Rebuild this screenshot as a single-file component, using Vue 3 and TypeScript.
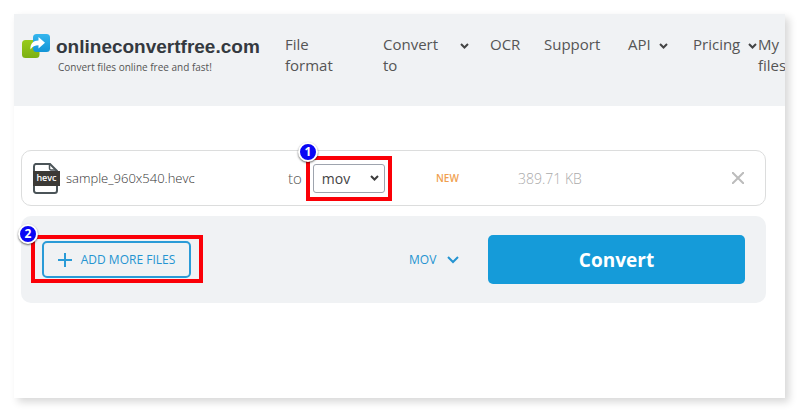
<script setup lang="ts">
import { ref } from 'vue'

interface NavItem {
  label: string
  menu: boolean
  kind: string
}

const navItems: NavItem[] = [
  { label: 'File format', menu: false, kind: 'narrow' },
  { label: 'Convert to', menu: true, kind: 'spread' },
  { label: 'OCR', menu: false, kind: '' },
  { label: 'Support', menu: false, kind: '' },
  { label: 'API', menu: true, kind: '' },
  { label: 'Pricing', menu: true, kind: '' },
  { label: 'My files', menu: false, kind: '' },
]

const formats = ['mov', 'mp4', 'avi', 'mkv']
const format = ref('mov')
</script>

<template>
  <div class="page">
    <header class="header">
      <a class="brand" href="#">
        <svg class="logo" viewBox="0 0 28 24" aria-hidden="true">
          <defs>
            <linearGradient id="green" x1="0" y1="0" x2="0" y2="1">
              <stop offset="0" stop-color="#97cb1c" />
              <stop offset="1" stop-color="#7cb013" />
            </linearGradient>
            <linearGradient id="blue" x1="0" y1="0" x2="0" y2="1">
              <stop offset="0" stop-color="#35b6ee" />
              <stop offset="1" stop-color="#1294d6" />
            </linearGradient>
          </defs>
          <rect x="0" y="6" width="17.500" height="18" rx="3.500" fill="url(#green)" />
          <rect x="11" y="0" width="17" height="18" rx="3.500" fill="url(#blue)" />
          <path d="M8.500 15.500C8 9.500 11.500 6.500 16.500 6.500V3L23 8.800l-6.500 5.700v-3.300c-3.500 0-6 1-8 4.300z" fill="#fff" />
        </svg>
        <span class="brand-text">
          <span class="brand-name">onlineconvertfree.com</span>
          <span class="tagline">Convert files online free and fast!</span>
        </span>
      </a>
      <nav class="nav">
        <a v-for="item in navItems" :key="item.label" class="nav-item" :class="item.kind" href="#">
          <span class="nav-label">{{ item.label }}</span>
          <svg v-if="item.menu" class="chevron" viewBox="0 0 9 6" aria-hidden="true">
            <path d="M1 1l3.500 3.500L8 1" fill="none" stroke="#444" stroke-width="2" />
          </svg>
        </a>
      </nav>
    </header>

    <main class="content">
      <section class="file-row">
        <div class="file">
          <svg class="file-icon" viewBox="0 0 28 31" aria-hidden="true">
            <path d="M3.500 1H18l7 7v19.500a2.500 2.500 0 0 1-2.500 2.500h-18.500A2.500 2.500 0 0 1 2 27.500v-24A2.500 2.500 0 0 1 3.500 1z" fill="#fff" stroke="#4b5458" stroke-width="2" />
            <path d="M17.500 1v4.500A1.500 1.500 0 0 0 19 7H24" fill="none" stroke="#4b5458" stroke-width="1.500" />
            <rect x="1" y="8" width="27" height="15" fill="#3c3a36" />
            <text class="file-type" x="14.500" y="18" text-anchor="middle">hevc</text>
          </svg>
          <span class="file-name">sample_960x540.hevc</span>
        </div>
        <div class="target">
          <label class="to" for="format">to</label>
          <span class="select-box">
            <select id="format" v-model="format" class="select">
              <option v-for="name in formats" :key="name" :value="name">{{ name }}</option>
            </select>
            <svg class="select-arrow" viewBox="0 0 9 6" aria-hidden="true">
              <path d="M1 1l3.500 3.500L8 1" fill="none" stroke="#3c3c3c" stroke-width="2" />
            </svg>
            <span class="highlight"><span class="badge above">1</span></span>
          </span>
        </div>
        <span class="new">NEW</span>
        <span class="size">389.71 KB</span>
        <button class="remove" type="button" aria-label="Remove file">
          <svg viewBox="0 0 12 12" aria-hidden="true">
            <path d="M0 0l12 12M12 0L0 12" fill="none" stroke="#bcbcbc" stroke-width="2" />
          </svg>
        </button>
      </section>

      <section class="actions">
        <div class="add-box">
          <button class="add" type="button">
            <svg viewBox="0 0 14 14" aria-hidden="true">
              <path d="M7 0v14M0 7h14" fill="none" stroke="#2a9bd7" stroke-width="2" />
            </svg>
            <span>ADD MORE FILES</span>
          </button>
          <span class="highlight wide"><span class="badge corner">2</span></span>
        </div>
        <button class="all" type="button">
          <span>MOV</span>
          <svg viewBox="0 0 12 8" aria-hidden="true">
            <path d="M1 1l5 5 5-5" fill="none" stroke="#2494d1" stroke-width="2" />
          </svg>
        </button>
        <button class="convert" type="button">Convert</button>
      </section>
    </main>
  </div>
</template>

<style>
body {
  background: #fff;
}
</style>

<style scoped>
.page {
  box-sizing: border-box;
  min-height: calc(100vh - 29px);
  margin: 14px 15px 15px 14px;
  overflow: hidden;
  background: #fff;
  box-shadow: 4px 4px 8px rgba(0, 0, 0, 0.16);
  font-family: "Open Sans", "Noto Sans", sans-serif;
  color: #555;
}

button {
  margin: 0;
  padding: 0;
  border: 0;
  background: none;
  font-family: inherit;
  cursor: pointer;
}

svg {
  display: block;
  flex: none;
}

.header {
  display: grid;
  grid-template-columns: 263fr 500fr;
  align-items: start;
  padding: 20px 0 30px 8px;
  background: #f0f2f4;
}

.brand {
  display: flex;
  gap: 6px;
  color: inherit;
  text-decoration: none;
}

.logo {
  width: 28px;
  height: 24px;
}

.brand-text {
  display: flex;
  flex-direction: column;
  white-space: nowrap;
}

.brand-name {
  font: bold 19px/26px "Liberation Sans", Arial, sans-serif;
  color: #34393f;
}

.tagline {
  padding-left: 2px;
  font-size: 10px;
  line-height: 14px;
}

.nav {
  display: grid;
  grid-template-columns:
    minmax(0, 98fr) minmax(0, 107fr) minmax(0, 54fr) minmax(0, 84fr)
    minmax(0, 65fr) minmax(0, 65fr) minmax(0, 27fr);
}

.nav-item {
  display: flex;
  align-items: flex-start;
  gap: 8px;
  font-size: 15px;
  line-height: 21px;
  color: #555;
  text-decoration: none;
}

.narrow .nav-label {
  width: 60px;
}

.spread .nav-label {
  width: 69px;
}

.chevron {
  width: 9px;
  height: 6px;
  margin-top: 9px;
}

.content {
  display: flex;
  flex-direction: column;
  gap: 10px;
  padding: 44px 19px 95px 7px;
}

.file-row {
  display: grid;
  grid-template-columns: 256fr 148fr 82fr 214fr 23fr;
  align-items: center;
  box-sizing: border-box;
  height: 56px;
  padding: 0 10px;
  border: 1px solid #dcdddd;
  border-radius: 10px;
}

.file {
  display: flex;
  align-items: center;
  gap: 6px;
}

.file-icon {
  width: 28px;
  height: 31px;
}

.file-type {
  font: 600 9px "Open Sans", sans-serif;
  fill: #fff;
}

.file-name {
  font-size: 13px;
  font-weight: 300;
  color: #333;
}

.target {
  display: flex;
  align-items: center;
  gap: 11px;
}

.to {
  font-size: 15px;
  font-weight: 300;
}

.select-box {
  position: relative;
  width: 72px;
}

.select {
  display: block;
  appearance: none;
  box-sizing: border-box;
  width: 100%;
  height: 29px;
  padding: 0 8px;
  border: 1px solid #9ea4ae;
  border-radius: 3px;
  background: #fff;
  font-family: inherit;
  font-size: 14px;
  color: #444;
}

.select-arrow {
  position: absolute;
  top: 11px;
  right: 6px;
  width: 9px;
  height: 6px;
  pointer-events: none;
}

.highlight {
  position: absolute;
  inset: -8px -7px;
  border: 4px solid #fb0007;
  pointer-events: none;
}

.wide {
  inset: -6px -12px -5px -11px;
}

.badge {
  position: absolute;
  width: 16px;
  height: 16px;
  border: 2px solid #fff;
  border-radius: 50%;
  background: #0a06f5;
  box-shadow: 0 1px 2px rgba(0, 0, 0, 0.6);
  font-size: 12px;
  font-weight: 700;
  line-height: 16px;
  text-align: center;
  color: #fff;
}

.above {
  top: -18px;
  left: -12px;
}

.corner {
  top: -15px;
  left: -17px;
}

.new {
  font-size: 10px;
  font-weight: 600;
  color: #f0a050;
}

.size {
  font-size: 14px;
  font-weight: 300;
  color: #aaa;
}

.remove {
  justify-self: start;
}

.remove svg {
  width: 12px;
  height: 12px;
}

.actions {
  display: grid;
  grid-template-columns: 367fr 79fr 257fr;
  align-items: center;
  padding: 19px 21px;
  border-radius: 10px;
  background: #f0f2f4;
}

.add-box {
  position: relative;
  justify-self: start;
}

.add {
  display: flex;
  align-items: center;
  justify-content: center;
  gap: 9px;
  box-sizing: border-box;
  width: 149px;
  height: 37px;
  border: 2px solid #2a9bd7;
  border-radius: 5px;
  font-size: 12px;
  color: #2494d1;
}

.add svg {
  width: 14px;
  height: 14px;
}

.all {
  display: flex;
  align-items: center;
  gap: 11px;
  font-size: 12px;
  color: #2494d1;
}

.all svg {
  width: 12px;
  height: 8px;
}

.convert {
  height: 49px;
  border-radius: 5px;
  background: #159bd9;
  font-size: 19px;
  font-weight: 700;
  color: #fff;
}
</style>
